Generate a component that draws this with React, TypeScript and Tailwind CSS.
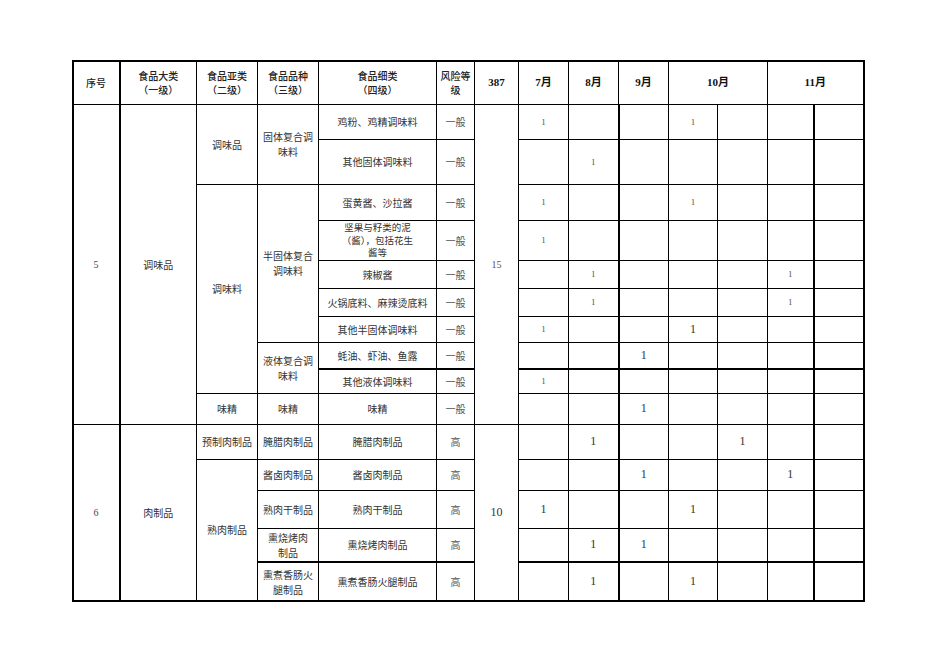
import { type JSX } from 'react'

type Mark = '' | 's' | 'l'

type Row = {
  h: string
  lead?: JSX.Element
  detail: string | JSX.Element
  risk: string
  total?: JSX.Element
  months: Mark[]
  thickTop?: boolean
}

const cjk = "font-['Noto_Sans_CJK_SC',sans-serif]"
const num = "font-['Liberation_Serif','Noto_Sans_CJK_SC',serif]"

const cell = 'border border-black text-center align-middle p-0 text-[10px] leading-[13px]'

function One({ m }: { m: Mark }): JSX.Element | null {
  if (m === 's') return <span className={`${num} text-[9px] text-[#555]`}>1</span>
  if (m === 'l') return <span className={`${num} text-[12px] text-[#333]`}>1</span>
  return null
}

function MonthCells({ months, thickTop }: { months: Mark[]; thickTop?: boolean }): JSX.Element {
  const t = thickTop ? 'border-t-2' : ''
  return (
    <>
      <td className={`${cell} ${t}`}><One m={months[0]} /></td>
      <td className={`${cell} ${t}`}><One m={months[1]} /></td>
      <td className={`${cell} ${t} border-l-2`}><One m={months[2]} /></td>
      <td className={`${cell} ${t}`}><One m={months[3]} /></td>
      <td className={`${cell} ${t}`}><One m={months[4]} /></td>
      <td className={`${cell} ${t}`}><One m={months[5]} /></td>
      <td className={`${cell} ${t} border-l-2 border-r-2`}><One m={months[6]} /></td>
    </>
  )
}

const txt = `${cjk} text-[#333]`

const rows: Row[] = [
  {
    h: 'h-[35px]',
    lead: (
      <>
        <td rowSpan={10} className={`${cell} border-l-2 border-r-2 ${num} text-[#444]`}>5</td>
        <td rowSpan={10} className={`${cell} ${txt}`}>调味品</td>
        <td rowSpan={2} className={`${cell} ${txt}`}>调味品</td>
        <td rowSpan={2} className={`${cell} ${txt} leading-[15px]`}>固体复合调<br />味料</td>
      </>
    ),
    detail: '鸡粉、鸡精调味料',
    risk: '一般',
    total: <td rowSpan={10} className={`${cell} ${num} text-[#555]`}>15</td>,
    months: ['s', '', '', 's', '', '', '']
  },
  { h: 'h-[45px]', detail: '其他固体调味料', risk: '一般', months: ['', 's', '', '', '', '', ''] },
  {
    h: 'h-[36px]',
    lead: (
      <>
        <td rowSpan={7} className={`${cell} ${txt}`}>调味料</td>
        <td rowSpan={5} className={`${cell} ${txt} leading-[15px]`}>半固体复合<br />调味料</td>
      </>
    ),
    detail: '蛋黄酱、沙拉酱',
    risk: '一般',
    months: ['s', '', '', 's', '', '', '']
  },
  {
    h: 'h-[40px]',
    detail: (
      <div className="text-[9.5px] leading-[12.5px]">
        坚果与籽类的泥
        <br />
        （酱），包括花生
        <br />
        酱等
      </div>
    ),
    risk: '一般',
    months: ['s', '', '', '', '', '', '']
  },
  { h: 'h-[28px]', detail: '辣椒酱', risk: '一般', months: ['', 's', '', '', '', 's', ''] },
  { h: 'h-[28px]', detail: '火锅底料、麻辣烫底料', risk: '一般', months: ['', 's', '', '', '', 's', ''] },
  { h: 'h-[26px]', detail: '其他半固体调味料', risk: '一般', months: ['s', '', '', 'l', '', '', ''] },
  {
    h: 'h-[27px]',
    lead: <td rowSpan={2} className={`${cell} ${txt} leading-[15px]`}>液体复合调<br />味料</td>,
    detail: '蚝油、虾油、鱼露',
    risk: '一般',
    months: ['', '', 'l', '', '', '', '']
  },
  { h: 'h-[24px]', detail: '其他液体调味料', risk: '一般', months: ['s', '', '', '', '', '', ''], thickTop: true },
  {
    h: 'h-[31px]',
    lead: (
      <>
        <td className={`${cell} ${txt}`}>味精</td>
        <td className={`${cell} ${txt}`}>味精</td>
      </>
    ),
    detail: '味精',
    risk: '一般',
    months: ['', '', 'l', '', '', '', '']
  },
  {
    h: 'h-[35px]',
    lead: (
      <>
        <td rowSpan={5} className={`${cell} border-l-2 border-r-2 border-b-2 ${num} text-[#444]`}>6</td>
        <td rowSpan={5} className={`${cell} border-b-2 ${txt}`}>肉制品</td>
        <td className={`${cell} ${txt}`}>预制肉制品</td>
        <td className={`${cell} ${txt}`}>腌腊肉制品</td>
      </>
    ),
    detail: '腌腊肉制品',
    risk: '高',
    total: <td rowSpan={5} className={`${cell} border-b-2 ${num} text-[12px] text-[#333]`}>10</td>,
    months: ['', 'l', '', '', 'l', '', '']
  },
  {
    h: 'h-[31px]',
    lead: (
      <>
        <td rowSpan={4} className={`${cell} border-b-2 ${txt}`}>熟肉制品</td>
        <td className={`${cell} ${txt}`}>酱卤肉制品</td>
      </>
    ),
    detail: '酱卤肉制品',
    risk: '高',
    months: ['', '', 'l', '', '', 'l', '']
  },
  {
    h: 'h-[38px]',
    lead: <td className={`${cell} ${txt}`}>熟肉干制品</td>,
    detail: '熟肉干制品',
    risk: '高',
    months: ['l', '', '', 'l', '', '', '']
  },
  {
    h: 'h-[34px]',
    lead: <td className={`${cell} ${txt} leading-[15px]`}>熏烧烤肉<br />制品</td>,
    detail: '熏烧烤肉制品',
    risk: '高',
    months: ['', 'l', 'l', '', '', '', '']
  },
  {
    h: 'h-[39px]',
    lead: <td className={`${cell} border-t-2 border-b-2 ${txt} leading-[15px]`}>熏煮香肠火<br />腿制品</td>,
    detail: '熏煮香肠火腿制品',
    risk: '高',
    months: ['', 'l', '', 'l', '', '', ''],
    thickTop: true
  }
]

const widths = ['w-[47px]', 'w-[77px]', 'w-[61px]', 'w-[61px]', 'w-[118px]', 'w-[38px]', 'w-[44px]', 'w-[50px]', 'w-[50px]', 'w-[50px]', 'w-[49px]', 'w-[50px]', 'w-[46px]', 'w-[50px]']

const head = `${cell} border-t-2 ${cjk} font-medium leading-[14px] text-[#222]`
const headBold = `${cell} border-t-2 ${num} font-bold text-[11px] text-[#111]`

export default function App(): JSX.Element {
  return (
    <div className="min-h-[662px] w-[936px] bg-white pt-[60px]">
      <table className="mx-auto w-[791px] table-fixed border-collapse">
        <colgroup>
          {widths.map((w, i) => (
            <col key={i} className={w} />
          ))}
        </colgroup>
        <tbody>
          <tr className="h-[43px]">
            <td className={`${head} border-l-2 border-r-2`}>序号</td>
            <td className={head}>食品大类<br />（一级）</td>
            <td className={head}>食品亚类<br />（二级）</td>
            <td className={head}>食品品种<br />（三级）</td>
            <td className={head}>食品细类<br />（四级）</td>
            <td className={head}>风险等<br />级</td>
            <td className={headBold}>387</td>
            <td className={headBold}>7月</td>
            <td className={headBold}>8月</td>
            <td className={headBold}>9月</td>
            <td colSpan={2} className={headBold}>10月</td>
            <td colSpan={2} className={`${headBold} border-r-2`}>11月</td>
          </tr>
          {rows.map((r, i) => {
            const last = i === rows.length - 1
            const t = r.thickTop ? 'border-t-2' : ''
            const b = last ? 'border-b-2' : ''
            return (
              <tr key={i} className={`${r.h} ${b}`}>
                {r.lead}
                <td className={`${cell} ${t} ${b} ${txt}`}>{r.detail}</td>
                <td className={`${cell} ${t} ${b} ${txt} text-[#555]`}>{r.risk}</td>
                {r.total}
                <MonthCells months={r.months} thickTop={r.thickTop} />
              </tr>
            )
          })}
        </tbody>
      </table>
    </div>
  )
}
